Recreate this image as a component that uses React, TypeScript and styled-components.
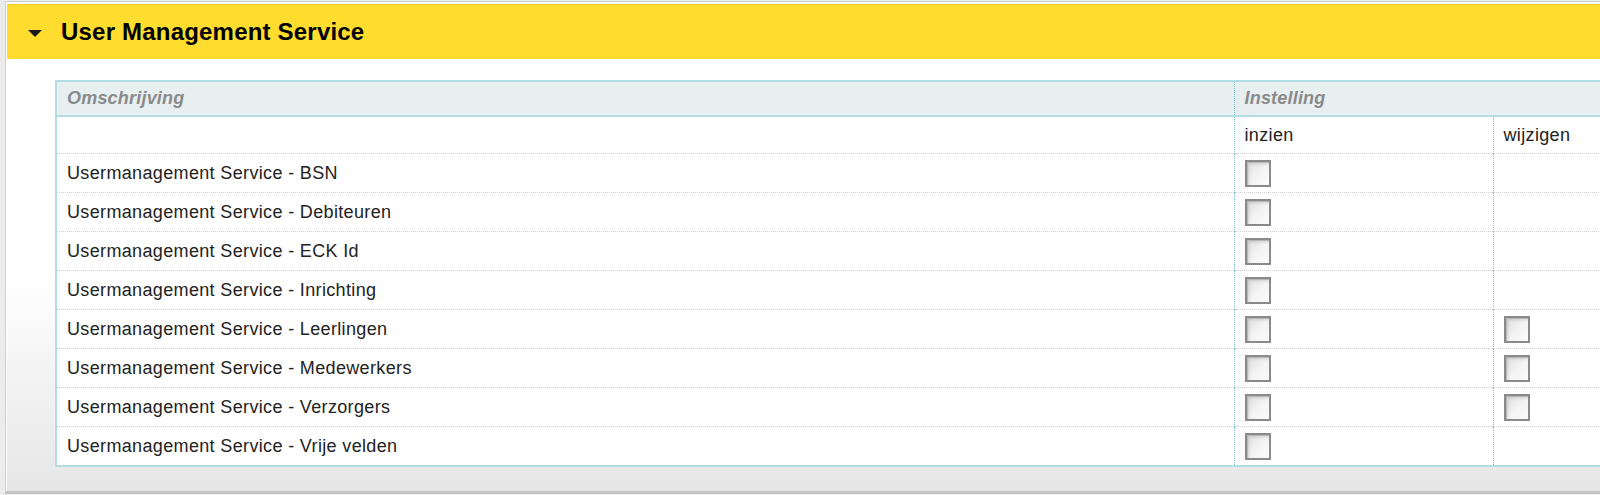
import React from "react";
import styled, { createGlobalStyle } from "styled-components";

const Global = createGlobalStyle`
  html, body {
    margin: 0;
    padding: 0;
    overflow: hidden;
    background: #ececec;
    font-family: "Liberation Sans", Arial, sans-serif;
  }
`;

const Page = styled.div`
  width: 1700px;
  padding-left: 5px;
`;

const Panel = styled.section`
  border-left: 1px solid #cfcfcf;
  border-top: 1px solid #cccccc;
  border-bottom: 3px solid #c2c2c2;
  margin-top: 1px;
  padding: 2px 0 0 1px;
  background: #fff;
`;

const Header = styled.header`
  display: flex;
  align-items: center;
  gap: 19px;
  height: 54px;
  padding-left: 21px;
  background: #ffdc2e;
  border-top: 1px solid #f6c81a;
`;

const Caret = styled.span`
  width: 0;
  height: 0;
  border-left: 7px solid transparent;
  border-right: 7px solid transparent;
  border-top: 7px solid #1a1a1a;
  margin-top: 2px;
`;

const Title = styled.h2`
  margin: 0;
  font-size: 24px;
  font-weight: bold;
  letter-spacing: 0.2px;
  color: #000;
`;

const Body = styled.div`
  padding: 21px 0 24px 48px;
  background: linear-gradient(to bottom, #ffffff 0%, #ffffff 50%, #e6e6e6 100%);
`;

const Table = styled.table`
  width: 1640px;
  table-layout: fixed;
  border-collapse: collapse;
  border: 2px solid #b5dce5;
  background: #fff;
  font-size: 18px;
  letter-spacing: 0.35px;
  color: #222;
`;

const HeadCell = styled.th`
  height: 33px;
  padding: 0 10px;
  text-align: left;
  font-weight: bold;
  font-style: italic;
  letter-spacing: 0.2px;
  color: #8a8a8a;
  background: #e7eff1;
  border-bottom: 2px solid #b5dce5;
  border-left: 1px dotted #7fc8da;
`;

const Row = styled.tr`
  border-bottom: 1px dotted #cfcfcf;
  &:last-child {
    border-bottom: none;
  }
`;

const Cell = styled.td<{ $tall?: boolean }>`
  height: ${(p) => (p.$tall ? "38px" : "36px")};
  padding: 0 10px;
  vertical-align: middle;
  border-left: 1px dotted #7fc8da;
`;

const Box = styled.span`
  display: block;
  box-sizing: border-box;
  width: 26px;
  height: 27px;
  border: 2px solid #8a8a8a;
  background: linear-gradient(135deg, #dedede 0%, #f4f4f4 55%, #fbfbfb 100%);
  box-shadow: inset 1px 1px 0 #b8b8b8, inset 2px 2px 3px rgba(0, 0, 0, 0.12);
`;

const rows: { label: string; edit: boolean }[] = [
  { label: "BSN", edit: false },
  { label: "Debiteuren", edit: false },
  { label: "ECK Id", edit: false },
  { label: "Inrichting", edit: false },
  { label: "Leerlingen", edit: true },
  { label: "Medewerkers", edit: true },
  { label: "Verzorgers", edit: true },
  { label: "Vrije velden", edit: false },
];

export default function App() {
  return (
    <>
      <Global />
      <Page>
        <Panel>
          <Header>
            <Caret />
            <Title>User Management Service</Title>
          </Header>
          <Body>
            <Table>
              <colgroup>
                <col style={{ width: 1178 }} />
                <col style={{ width: 259 }} />
                <col />
              </colgroup>
              <thead>
                <tr>
                  <HeadCell>Omschrijving</HeadCell>
                  <HeadCell colSpan={2}>Instelling</HeadCell>
                </tr>
              </thead>
              <tbody>
                <Row>
                  <Cell></Cell>
                  <Cell>inzien</Cell>
                  <Cell>wijzigen</Cell>
                </Row>
                {rows.map((r) => (
                  <Row key={r.label}>
                    <Cell $tall>Usermanagement Service - {r.label}</Cell>
                    <Cell $tall>
                      <Box />
                    </Cell>
                    <Cell $tall>{r.edit ? <Box /> : null}</Cell>
                  </Row>
                ))}
              </tbody>
            </Table>
          </Body>
        </Panel>
      </Page>
    </>
  );
}
